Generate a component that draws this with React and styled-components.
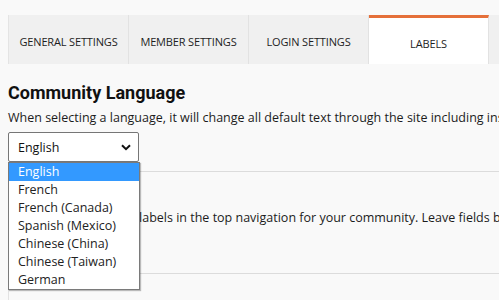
import React from "react";
import styled, { createGlobalStyle } from "styled-components";

const GlobalStyle = createGlobalStyle`
  body {
    margin: 0;
    background: #f9f9f9;
    overflow: hidden;
    font-family: "Open Sans", "Noto Sans", sans-serif;
    color: #222;
  }
`;

const Page = styled.div`
  width: 760px;
  padding: 15px 8px 0;
`;

const TabBar = styled.div`
  display: flex;
  height: 49px;
  background: #f0f0f0;
  border-left: 1px solid #e4e4e4;
`;

const Tab = styled.div`
  width: 120px;
  flex: none;
  display: flex;
  align-items: center;
  justify-content: center;
  box-sizing: border-box;
  border-right: 1px solid #e2e2e2;
  font-size: 11px;
  text-transform: uppercase;
  letter-spacing: -0.15px;
  color: #1e1e1e;
  background: ${(p) => (p.active ? "#fff" : "transparent")};
  border-top: ${(p) => (p.active ? "3px solid #e5703a" : "none")};
  padding-top: ${(p) => (p.active ? "5px" : "4px")};
`;

const Section = styled.div`
  padding: ${(p) => p.top}px 0 10px;
  border-bottom: 1px solid #dcdcdc;
  height: ${(p) => p.h}px;
  box-sizing: border-box;
`;

const Heading = styled.h2`
  margin: 0;
  font-family: Roboto, "Liberation Sans", sans-serif;
  font-size: 18px;
  font-weight: 700;
  line-height: 22px;
  color: #111;
`;

const Description = styled.p`
  margin: 4px 0 0;
  font-size: 12.5px;
  line-height: 20px;
  white-space: nowrap;
  color: #1c1c1c;
`;

const SelectWrap = styled.div`
  position: relative;
  width: 131px;
  margin-top: 4px;
`;

const SelectBox = styled.div`
  height: 30px;
  box-sizing: border-box;
  border: 1px solid #767676;
  border-radius: 2px;
  background: #fff;
  display: flex;
  align-items: center;
  justify-content: space-between;
  padding: 0 7px 0 9px;
  font-size: 12.5px;
  color: #111;
`;

const Options = styled.ul`
  position: absolute;
  top: 30px;
  left: 0;
  width: 132px;
  margin: 0;
  padding: 0;
  list-style: none;
  box-sizing: border-box;
  background: #fff;
  border: 1px solid #7a7a7a;
  box-shadow: 1px 1px 1px rgba(0, 0, 0, 0.25);
  z-index: 10;
`;

const Option = styled.li`
  height: 18px;
  line-height: 18px;
  padding-left: 9px;
  font-size: 12.5px;
  background: ${(p) => (p.selected ? "#3399ff" : "#fff")};
  color: ${(p) => (p.selected ? "#fff" : "#222")};
`;

const Box = styled.div`
  height: 40px;
  border-left: 1px solid #e2e2e2;
`;

const Chevron = () => (
  <svg width="10" height="7" viewBox="0 0 10 7">
    <path d="M1 1.2 L5 5.2 L9 1.2" fill="none" stroke="#111" strokeWidth="2" />
  </svg>
);

const tabs = ["General Settings", "Member Settings", "Login Settings", "Labels"];
const languages = [
  "English",
  "French",
  "French (Canada)",
  "Spanish (Mexico)",
  "Chinese (China)",
  "Chinese (Taiwan)",
  "German",
];

export default function App() {
  return (
    <>
      <GlobalStyle />
      <Page>
        <TabBar>
          {tabs.map((t) => (
            <Tab key={t} active={t === "Labels"}>
              {t}
            </Tab>
          ))}
        </TabBar>
        <Section h={108} top={18}>
          <Heading>Community Language</Heading>
          <Description>
            When selecting a language, it will change all default text through the site including instructions and buttons.
          </Description>
          <SelectWrap>
            <SelectBox>
              English
              <Chevron />
            </SelectBox>
            <Options>
              {languages.map((l) => (
                <Option key={l} selected={l === "English"}>
                  {l}
                </Option>
              ))}
            </Options>
          </SelectWrap>
        </Section>
        <Section h={102} top={10}>
          <Heading>Navigation</Heading>
          <Description>
            Customize the default labels in the top navigation for your community. Leave fields blank to use the default labels.
          </Description>
        </Section>
        <Box />
      </Page>
    </>
  );
}
